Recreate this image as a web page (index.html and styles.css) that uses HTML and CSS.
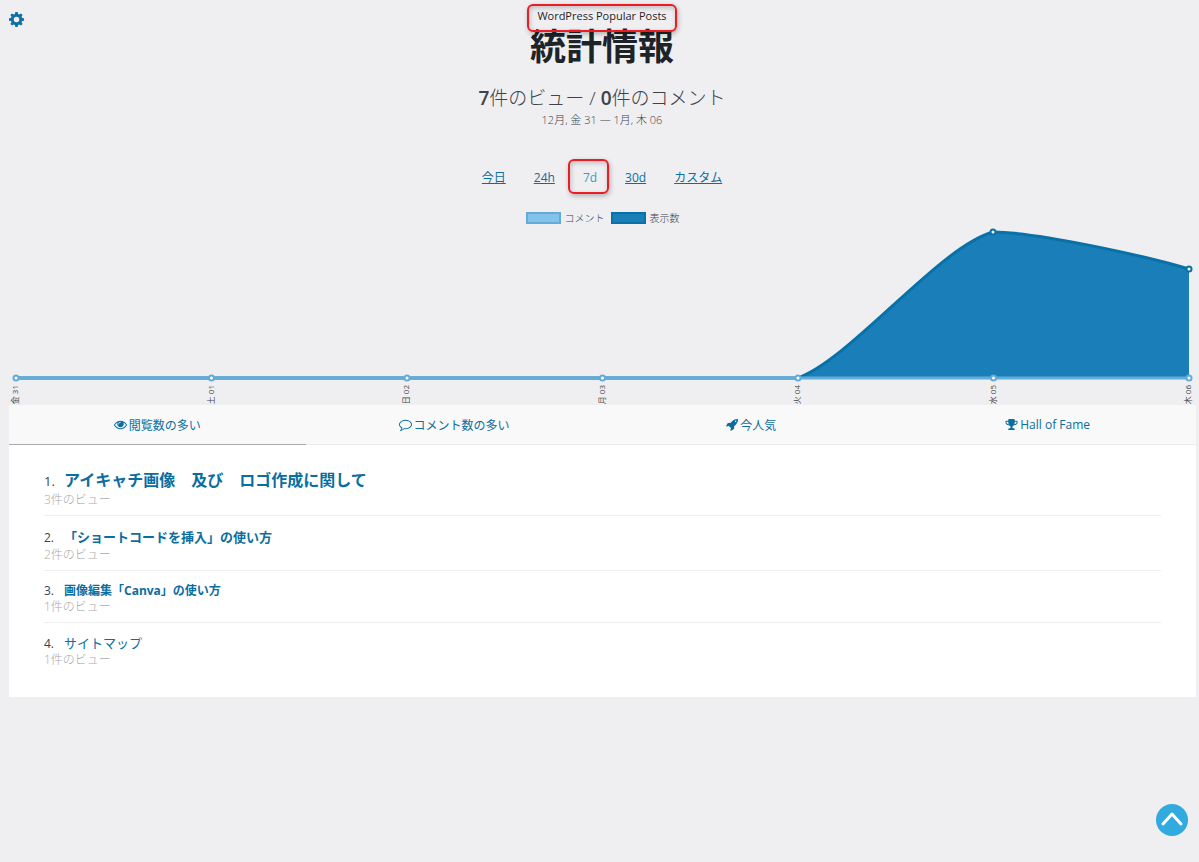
FILE: index.html
```html
<!DOCTYPE html>
<html lang="ja">
<head>
<meta charset="utf-8">
<meta name="viewport" content="width=device-width, initial-scale=1">
<title>WordPress Popular Posts</title>
<link rel="stylesheet" href="styles.css">
</head>
<body>
<button class="settings" type="button" aria-label="設定">
  <svg class="settings-icon" viewBox="0 0 14 14"><path fill-rule="evenodd" d="M5.9 0h2.2l.4 1.8 1.1.5L11.200 1.300l1.500 1.500-1 1.600.5 1.100 1.800.4v2.200l-1.800.4-.5 1.100 1 1.600-1.500 1.500-1.600-1-1.100.5-.4 1.800H5.900l-.4-1.800-1.100-.5-1.600 1-1.500-1.500 1-1.600-.5-1.100L0 8.100V5.900l1.800-.4.5-1.100-1-1.600 1.500-1.500 1.600 1 1.100-.5zM7 4.400a2.600 2.600 0 1 0 0 5.200 2.600 2.600 0 0 0 0-5.200z"/></svg>
</button>
<header class="header">
  <p class="plugin">WordPress Popular Posts</p>
  <h1 class="title">統計情報</h1>
  <p class="totals"><strong>7</strong>件のビュー / <strong>0</strong>件のコメント</p>
  <p class="dates">12月, 金 31 — 1月, 木 06</p>
  <nav class="ranges">
    <a href="#">今日</a>
    <a href="#">24h</a>
    <a href="#" class="current">7d</a>
    <a href="#">30d</a>
    <a href="#">カスタム</a>
  </nav>
</header>
<main class="stats">
  <div class="legend">
    <span class="key"><i class="swatch comments"></i>コメント</span>
    <span class="key"><i class="swatch views"></i>表示数</span>
  </div>
  <svg class="chart" viewBox="0 0 1187 178" role="img" aria-label="表示数とコメント">
    <path class="area" d="M789 151C843 131 930 20 984 5C1027 5 1137 29 1180 42V151Z"/>
    <path class="views-line" d="M7 151H789C843 131 930 20 984 5C1027 5 1137 29 1180 42"/>
    <path class="comments-line" d="M7 151H1180"/>
    <g class="dots dark"><circle cx="984" cy="5" r="2.500"/><circle cx="1180" cy="42" r="2.500"/></g>
    <g class="dots"><circle cx="7" cy="151" r="2.500"/><circle cx="202.500" cy="151" r="2.500"/><circle cx="398" cy="151" r="2.500"/><circle cx="593.500" cy="151" r="2.500"/><circle cx="789" cy="151" r="2.500"/><circle cx="984.500" cy="151" r="2.500"/><circle cx="1180" cy="151" r="2.500"/></g>
    <g class="ticks">
      <text transform="translate(9 158) rotate(-90)">金 31</text>
      <text transform="translate(205 158) rotate(-90)">土 01</text>
      <text transform="translate(400 158) rotate(-90)">日 02</text>
      <text transform="translate(596 158) rotate(-90)">月 03</text>
      <text transform="translate(791 158) rotate(-90)">火 04</text>
      <text transform="translate(987 158) rotate(-90)">水 05</text>
      <text transform="translate(1182 158) rotate(-90)">木 06</text>
    </g>
  </svg>
  <nav class="tabs">
    <a href="#" class="tab active"><svg class="icon" viewBox="0 0 1792 1792"><path d="M1664 960q-152-236-381-353 61 104 61 225 0 185-131.500 316.500t-316.500 131.500-316.500-131.500-131.500-316.500q0-121 61-225-229 117-381 353 133 205 333.500 326.500t434.500 121.500 434.500-121.500 333.500-326.500zm-720-384q0-20-14-34t-34-14q-125 0-214.500 89.500t-89.500 214.500q0 20 14 34t34 14 34-14 14-34q0-86 61-147t147-61q20 0 34-14t14-34zm848 384q0 34-20 69-140 230-376.500 368.500t-499.500 138.500-499.500-139-376.500-368q-20-35-20-69t20-69q140-229 376.500-368t499.500-139 499.500 139 376.500 368q20 35 20 69z"/></svg>閲覧数の多い</a>
    <a href="#" class="tab"><svg class="icon" viewBox="0 0 1792 1792"><path d="M896 384q-204 0-381.500 69.500t-282 187.500-104.500 255q0 112 71.500 213.500t201.500 175.500l87 50-27 96q-24 91-70 172 152-63 275-171l43-38 57 6q69 8 130 8 204 0 381.500-69.500t282-187.500 104.500-255-104.500-255-282-187.500-381.500-69.500zm896 512q0 174-120 321.500t-326 233-450 85.500q-70 0-145-8-198 175-460 242-49 14-114 22h-5q-15 0-27-10.500t-16-27.500v-1q-3-4-.5-12t2-10 4.500-9.500l6-9 7-8.500 8-9q7-8 31-34.500t34.500-38 31-39.500 32.500-51 27-59 26-76q-157-89-247.500-220t-90.500-281q0-174 120-321.500t326-233 450-85.500 450 85.500 326 233 120 321.500z"/></svg>コメント数の多い</a>
    <a href="#" class="tab"><svg class="icon" viewBox="0 0 1792 1792"><path d="M1568 448q0-40-28-68t-68-28-68 28-28 68 28 68 68 28 68-28 28-68zm224-288q0 249-75.500 430.500t-253.500 360.500q-81 80-195 176l-20 379q-2 16-16 26l-384 224q-7 4-16 4-12 0-23-9l-64-64q-13-14-8-32l85-276-281-281-276 85q-3 1-9 1-14 0-23-9l-64-64q-17-19-5-39l224-384q10-14 26-16l379-20q96-114 176-195 188-187 358-258t431-71q14 0 24 9.500t10 22.500z"/></svg>今人気</a>
    <a href="#" class="tab"><svg class="icon" viewBox="0 0 1792 1792"><path d="M522 883q-74-162-74-371h-256v96q0 78 94.500 162t235.500 113zm1078-275v-96h-256q0 209-74 371 141-29 235.500-113t94.500-162zm128-128v128q0 71-41.500 143t-112 130-173 97.500-215.500 44.500q-42 54-95 95-38 34-52.500 72.500t-14.500 89.500q0 54 30.500 91t97.500 37q75 0 133.500 45.500t58.500 114.500v64q0 14-9 23t-23 9h-832q-14 0-23-9t-9-23v-64q0-69 58.500-114.500t133.500-45.500q67 0 97.500-37t30.500-91q0-51-14.500-89.500t-52.500-72.500q-53-41-95-95-113-5-215.500-44.500t-173-97.500-112-130-41.500-143v-128q0-40 28-68t68-28h288v-96q0-66 47-113t113-47h576q66 0 113 47t47 113v96h288q40 0 68 28t28 68z"/></svg>Hall of Fame</a>
  </nav>
  <ol class="posts">
    <li class="post"><div class="line"><span class="num first">1.</span><a class="large" href="#">アイキャチ画像　及び　ロゴ作成に関して</a></div><div class="count">3件のビュー</div></li>
    <li class="post"><div class="line"><span class="num">2.</span><a class="medium" href="#">「ショートコードを挿入」の使い方</a></div><div class="count">2件のビュー</div></li>
    <li class="post"><div class="line"><span class="num">3.</span><a class="small" href="#">画像編集「Canva」の使い方</a></div><div class="count">1件のビュー</div></li>
    <li class="post"><div class="line"><span class="num">4.</span><a class="plain" href="#">サイトマップ</a></div><div class="count">1件のビュー</div></li>
  </ol>
</main>
<button class="to-top" type="button" aria-label="トップへ戻る">
  <svg class="arrow" viewBox="0 0 32 32"><path d="M7 20l9-10 9 10"/></svg>
</button>
</body>
</html>
```
FILE: styles.css
```css
* { box-sizing: border-box; }
body {
  margin: 0;
  background: #efeff1;
  color: #3c434a;
  font-family: "Open Sans", "Noto Sans CJK JP", sans-serif;
  font-size: 12px;
}
p, h1, ol { margin: 0; padding: 0; }
a { color: #0a6e9f; }
.settings {
  position: absolute;
  top: 12px;
  left: 9px;
  padding: 0;
  border: 0;
  background: none;
  line-height: 0;
}
.settings-icon { width: 15px; height: 15px; fill: #116fa6; }
.header {
  display: flex;
  flex-direction: column;
  align-items: center;
  padding: 4px 0 0 5px;
}
.plugin {
  z-index: 1;
  padding: 2px 8px 6px;
  border: 2px solid #ed1c24;
  border-radius: 6px;
  box-shadow: 1px 2px 5px #0004, inset 1px 2px 5px #0003;
  color: #1d2327;
  font-size: 11px;
  line-height: 16px;
}
.title {
  margin-top: -3px;
  color: #1d2327;
  font-size: 36px;
  font-weight: 700;
  line-height: 36px;
}
.totals {
  margin-top: 19px;
  font-size: 19px;
  font-weight: 300;
  line-height: 28px;
}
.totals strong { font-weight: 600; }
.dates { font-size: 11px; font-weight: 300; line-height: 16px; }
.ranges {
  display: flex;
  gap: 28px;
  margin-top: 42px;
  line-height: 16px;
}
.current { position: relative; color: #2f9fc9; text-decoration: none; }
.current::after {
  content: "";
  position: absolute;
  inset: -11px -12px -8px -15px;
  border: 2px solid #ed1c24;
  border-radius: 6px;
  box-shadow: 1px 2px 5px #0004, inset 1px 2px 5px #0003;
}
.stats { margin: 23px 3px 0 9px; }
.legend {
  display: flex;
  justify-content: center;
  gap: 6px;
  font-size: 10px;
  font-weight: 300;
  line-height: 18px;
}
.key { display: flex; align-items: center; gap: 4px; }
.swatch { width: 35px; height: 12px; border: 2px solid; }
.comments { background: #84c1eb; border-color: #63abd8; }
.views { background: #1a7fb9; border-color: #0871a8; }
.chart { display: block; width: 100%; }
.area { fill: #1a7fb9; }
.views-line { fill: none; stroke: #0871a8; stroke-width: 3; }
.comments-line { stroke: #63abd8; stroke-width: 3; }
.dots { fill: #fff; stroke: #63abd8; stroke-width: 2; }
.dark { stroke: #0871a8; }
.ticks { fill: #444; font-size: 8px; text-anchor: end; }
.tabs {
  display: grid;
  grid-template-columns: repeat(4, 1fr);
  background: #f9f9f9;
}
.tab {
  display: flex;
  align-items: center;
  justify-content: center;
  gap: 2px;
  height: 40px;
  border-bottom: 1px solid #ececec;
  font-size: 12px;
  text-decoration: none;
}
.active { border-color: #aaa; }
.icon { width: 13px; height: 13px; fill: #0a6e9f; }
.posts {
  padding: 11px 35px 22px;
  background: #fff;
  list-style: none;
}
.post { padding: 12px 0 7px; border-bottom: 1px solid #eee; }
.post:last-child { border: 0; }
.line { display: flex; align-items: baseline; }
.num { width: 20px; line-height: 16px; }
.first { font-size: 13px; }
.line a { font-weight: 700; text-decoration: none; line-height: 16px; }
.line .large { font-size: 16px; line-height: 24px; }
.line .medium { font-size: 13px; line-height: 19px; }
.line .small { font-size: 12px; }
.line .plain { font-size: 13px; font-weight: 400; }
.count { color: #aaa; font-weight: 300; line-height: 16px; }
.to-top {
  position: fixed;
  right: 11px;
  bottom: 26px;
  width: 32px;
  height: 32px;
  padding: 0;
  border: 0;
  border-radius: 50%;
  background: #31aae0;
}
.arrow {
  display: block;
  fill: none;
  stroke: #fff;
  stroke-width: 3;
  stroke-linecap: round;
  stroke-linejoin: round;
}
```
